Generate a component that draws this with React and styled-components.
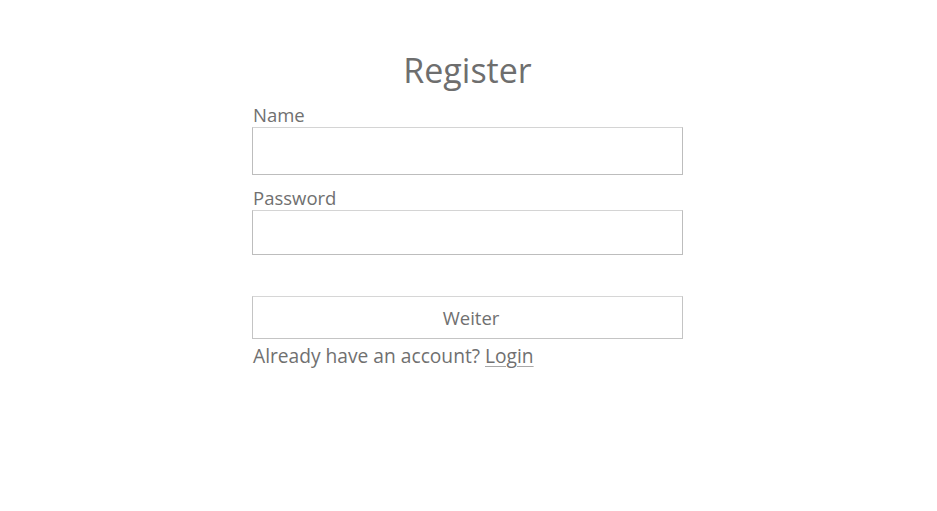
import React from "react";
import styled, { createGlobalStyle } from "styled-components";

const Global = createGlobalStyle`
  html, body { margin: 0; padding: 0; background: #fff; }
  body { font-family: "Open Sans", "Noto Sans", sans-serif; color: #707070; }
`;

const Page = styled.div`
  display: flex;
  justify-content: center;
  padding: 46px 2px 0 0;
`;

const Form = styled.form`
  width: 431px;
  display: flex;
  flex-direction: column;
`;

const Title = styled.h1`
  margin: 0 0 9px;
  font-size: 34px;
  font-weight: 400;
  line-height: 48px;
  text-align: center;
  color: #6e6e6e;
`;

const Label = styled.label`
  font-size: 18.5px;
  line-height: 24px;
  color: #707070;
  padding-left: 1px;
`;

const Input = styled.input`
  box-sizing: border-box;
  width: 100%;
  height: ${(p) => p.$h}px;
  margin: 0 0 ${(p) => p.$mb}px;
  border: 1px solid #bdbdbd;
  border-top-color: #d4d4d4;
  background: #fff;
  outline: none;
  font: inherit;
`;

const Button = styled.button`
  box-sizing: border-box;
  width: 100%;
  height: 43px;
  margin-top: 41px;
  border: 1px solid #c4c4c4;
  border-top-color: #d6d6d6;
  background: #fff;
  font-family: inherit;
  font-size: 18.5px;
  color: #707070;
  padding: 0 0 0 7px;
`;

const Footer = styled.p`
  margin: 3px 0 0;
  padding-left: 1px;
  font-size: 19.2px;
  line-height: 28px;
  color: #707070;
`;

const Link = styled.a`
  color: #707070;
  text-decoration: underline;
  text-decoration-color: #a8a8a8;
  text-underline-offset: 3px;
`;

export default function App() {
  return (
    <>
      <Global />
      <Page>
        <Form onSubmit={(e) => e.preventDefault()}>
          <Title>Register</Title>
          <Label>Name</Label>
          <Input $h={48} $mb={11} />
          <Label>Password</Label>
          <Input type="password" $h={45} $mb={0} />
          <Button type="submit">Weiter</Button>
          <Footer>
            Already have an account? <Link href="#">Login</Link>
          </Footer>
        </Form>
      </Page>
    </>
  );
}
